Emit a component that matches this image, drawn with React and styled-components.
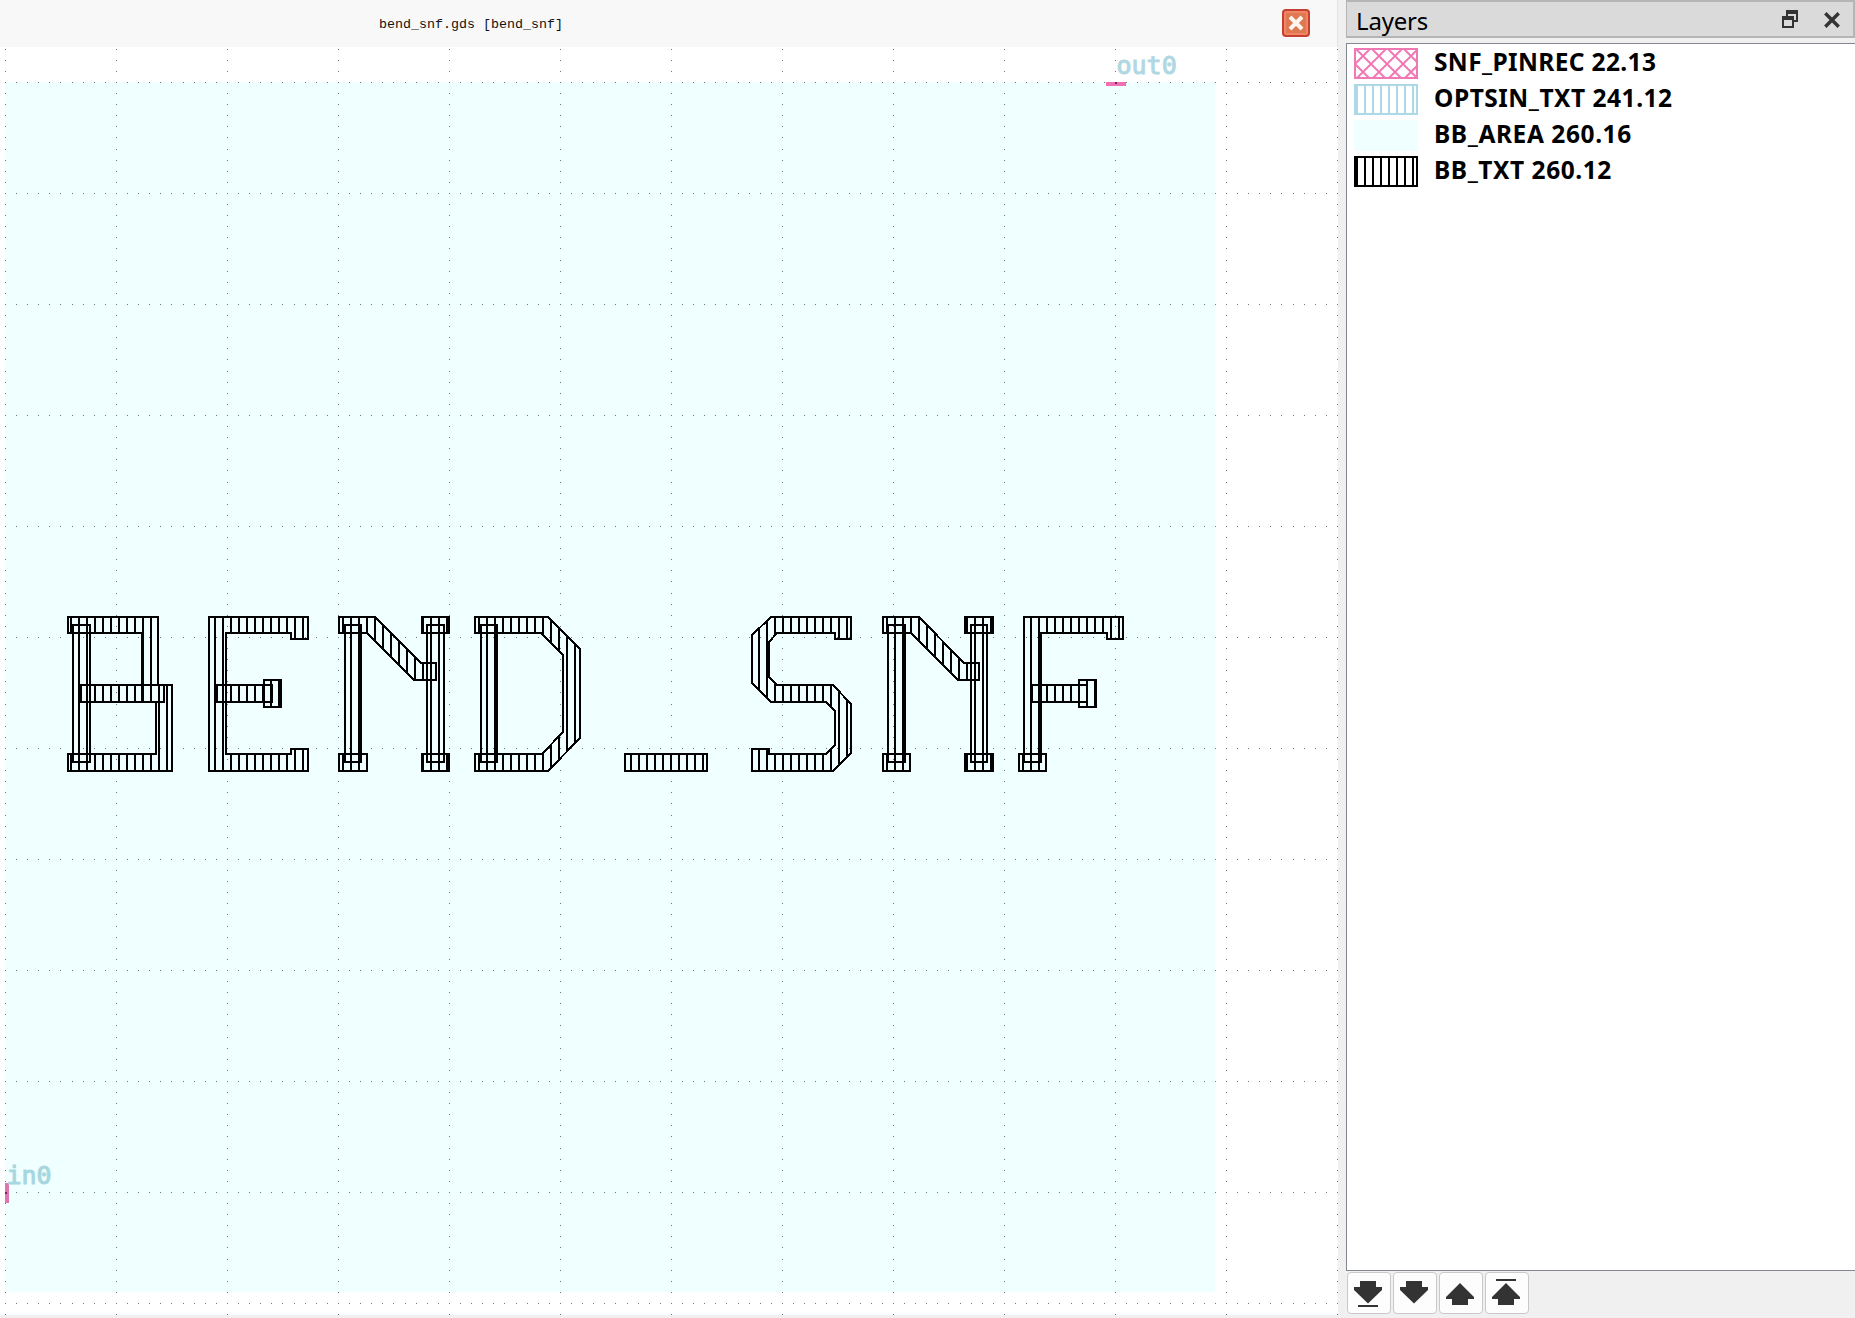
import React from 'react';
import styled, { createGlobalStyle } from 'styled-components';

const GlobalStyle = createGlobalStyle`
  * { box-sizing: border-box; }
  body { margin: 0; background: #f0f0f0; overflow: hidden; }
`;

const Window = styled.div`
  display: flex;
  width: 1855px;
  height: 1318px;
  background: #f0f0f0;
  font-family: 'Noto Sans', 'Open Sans', sans-serif;
  color: #000;
`;

const Viewer = styled.main`
  display: flex;
  flex-direction: column;
  width: 1338px;
  flex: none;
`;

const TabBar = styled.header`
  display: flex;
  align-items: center;
  justify-content: space-between;
  height: 47px;
  padding: 0 27px 1px 379px;
  background: #f8f8f8;
  border-right: 1px solid #e2e2e2;
`;

const TabTitle = styled.span`
  padding-top: 4px;
  font: 13.33px/20px 'Liberation Mono', monospace;
  color: #111;
  white-space: pre;
`;

const TabClose = styled.button`
  display: flex;
  align-items: center;
  justify-content: center;
  width: 28px;
  height: 28px;
  padding: 0;
  border: 2px solid #c5402f;
  border-radius: 4px;
  background: #de7850;
  box-shadow: inset 0 0 0 2px #f18565;
`;

const Canvas = styled.svg`
  display: block;
  width: 1338px;
  height: 1268px;
  background: #fff;
`;

const PinLabel = styled.text`
  font: 25px 'DejaVu Sans Mono', monospace;
  fill: ${(p) => p.$color};
  stroke: ${(p) => p.$color};
  stroke-width: 1px;
`;

const Dock = styled.aside`
  display: flex;
  flex-direction: column;
  flex: 1;
  margin-left: 8px;
`;

const DockTitle = styled.div`
  display: flex;
  align-items: center;
  height: 38px;
  padding: 0 13px 0 9px;
  background: #dadada;
  border: 2px solid #b5b5b5;
  border-left-width: 1px;
`;

const DockName = styled.span`
  flex: 1;
  padding-top: 3px;
  font-size: 24px;
  line-height: 30px;
  letter-spacing: -0.2px;
`;

const DockIcon = styled.svg`
  display: block;
  width: 16px;
  height: 18px;
  margin-left: ${(p) => p.$gap || 0}px;
`;

const LayerList = styled.ul`
  flex: none;
  height: 1228px;
  margin: 5px 0 0;
  padding: 4px 0 0 7px;
  list-style: none;
  background: #fff;
  border: 1px solid #828790;
  border-right: 0;
`;

const LayerRow = styled.li`
  display: flex;
  align-items: flex-start;
  height: 36px;
`;

const Swatch = styled.svg`
  display: block;
  width: 64px;
  height: 31px;
  flex: none;
`;

const LayerName = styled.span`
  margin-left: 16px;
  font-size: 24.5px;
  font-weight: 700;
  line-height: 28px;
  letter-spacing: ${(p) => p.$spacing}px;
  white-space: pre;
`;

const ButtonBar = styled.div`
  display: flex;
  gap: 2px;
  padding: 1px 0 0 1px;
`;

const MoveButton = styled.button`
  width: 44px;
  height: 42px;
  padding: 0;
  border: 1px solid #c9c9c9;
  border-radius: 4px;
  background: #fdfdfd;
`;

const MoveIcon = styled.svg`
  display: block;
  width: 42px;
  height: 40px;
  fill: #333;
`;

const rect = (x1, y1, x2, y2) => `${x1},${y1} ${x2},${y1} ${x2},${y2} ${x1},${y2}`;

const glyphShapes = [
  // B
  '68,617 158,617 158,685 172,685 172,771 68,771 68,754 156,754 156,702 142,702 142,633 68,633',
  rect(73, 625, 90, 762),
  rect(81, 685, 164, 702),
  // E
  '209,617 308,617 308,639 291,639 291,633 226,633 226,754 291,754 291,749 308,749 308,771 209,771',
  rect(217, 685, 272, 702),
  rect(264, 680, 281, 707),
  // N
  '339,617 375,617 421,663 436,663 436,680 414,680 367,633 339,633',
  rect(345, 625, 361, 762),
  rect(339, 754, 367, 771),
  rect(422, 617, 449, 633),
  rect(427, 625, 444, 762),
  rect(422, 754, 449, 771),
  // D
  '475,617 548,617 580,649 580,738 548,771 475,771 475,754 542,754 563,732 563,655 541,633 475,633',
  rect(481, 625, 497, 762),
  // underscore
  rect(625, 754, 707, 771),
  // S
  '771,617 851,617 851,639 835,639 835,633 777,633 769,642 769,677 777,685 833,685 851,704 851,753 833,771 752,771 752,749 769,749 769,754 826,754 835,745 835,711 826,702 771,702 752,683 752,635',
  // N
  '883,617 919,617 964,663 979,663 979,680 958,680 911,633 883,633',
  rect(888, 625, 905, 762),
  rect(883, 754, 910, 771),
  rect(965, 617, 993, 633),
  rect(971, 625, 987, 762),
  rect(965, 754, 993, 771),
  // F
  '1024,617 1123,617 1123,639 1107,639 1107,633 1041,633 1041,762 1024,762',
  rect(1019, 754, 1046, 771),
  rect(1032, 685, 1087, 702),
  rect(1079, 680, 1096, 707),
];

const STEP = 111;
const OFFSETS = [0, 11, 22, 33, 44, 55, 67, 78, 89, 100];

function gridPath() {
  const dots = [];
  const dot = (x, y) => {
    if (x < 1338 && y >= 47 && y < 1315) dots.push(`M${x} ${y}h1v1h-1z`);
  };
  for (let i = 0; i <= 12; i += 1) {
    for (let j = -1; j <= 11; j += 1) {
      const x = 5 + i * STEP;
      const y = 82 + j * STEP;
      OFFSETS.forEach((o) => {
        dot(x, y + o);
        if (o) dot(x + o, y);
      });
    }
  }
  return dots.join('');
}

const GRID = gridPath();

function Layout() {
  return (
    <Canvas viewBox="0 47 1338 1268">
      <defs>
        <pattern id="hatch" width="8" height="8" patternUnits="userSpaceOnUse">
          <rect x="6" width="2" height="8" fill="#000" />
        </pattern>
      </defs>
      <g shapeRendering="crispEdges">
        <rect x="5" y="82" width="1210" height="1210" fill="#f0ffff" />
        <rect x="1106" y="82" width="20" height="4" fill="#ee70b3" />
        <rect x="5" y="1183" width="4" height="20" fill="#df75b0" />
        <path d={GRID} fill="#6e7676" />
        <rect x="1115" y="82" width="2" height="2" fill="#7b1c5c" />
        <rect x="5" y="1192" width="2" height="2" fill="#7b1c6c" />
        {glyphShapes.map((points, i) => (
          <polygon key={i} points={points} fill="url(#hatch)" stroke="#000" strokeWidth="2" />
        ))}
      </g>
      <PinLabel x="1116.5" y="74" $color="#b0d8e3">out0</PinLabel>
      <PinLabel x="6.5" y="1184" $color="#a6d7e1">in0</PinLabel>
    </Canvas>
  );
}

const layers = [
  { name: 'SNF_PINREC 22.13', color: '#f078b4', kind: 'cross', spacing: 0.37 },
  { name: 'OPTSIN_TXT 241.12', color: '#add8e6', kind: 'lines', spacing: 0.52 },
  { name: 'BB_AREA 260.16', color: '#f0ffff', kind: 'solid', spacing: 0.58 },
  { name: 'BB_TXT 260.12', color: '#000000', kind: 'lines', spacing: 0.55 },
];

function LayerSwatch({ color, kind }) {
  if (kind === 'solid') {
    return (
      <Swatch viewBox="0 0 64 31">
        <rect width="64" height="31" fill={color} />
      </Swatch>
    );
  }
  const lines =
    kind === 'lines'
      ? [3, 11, 19, 27, 35, 43, 51, 59].map((x) => `M${x} 0V31`)
      : [-31, -15, 1, 17, 33, 49].map((x) => `M${x} 0l31 31M${x + 32} 0l-31 31`);
  return (
    <Swatch viewBox="0 0 64 31" fill="none" stroke={color} strokeWidth="2">
      <path d={lines.join('')} strokeWidth="2" />
      <rect x="1" y="1" width="62" height="29" />
    </Swatch>
  );
}

const DOWN = 'M12 8h16v6h6v3L20 30.5 6 17v-3h6z';
const UP = 'M20 10l14 14v2h-6v6H12v-6H6v-2z';

const moves = [
  { label: 'Move to bottom', d: `${DOWN}M10 32h20v2H10z` },
  { label: 'Move down', d: DOWN },
  { label: 'Move up', d: UP },
  { label: 'Move to top', d: `${UP}M10 6h20v2H10z` },
];

export default function App() {
  return (
    <Window>
      <GlobalStyle />
      <Viewer>
        <TabBar>
          <TabTitle>bend_snf.gds [bend_snf]</TabTitle>
          <TabClose aria-label="Close tab">
            <svg width="16" height="16" viewBox="0 0 16 16" stroke="#fff4ee" strokeWidth="4">
              <path d="M2 2l12 12M14 2L2 14" />
            </svg>
          </TabClose>
        </TabBar>
        <Layout />
      </Viewer>
      <Dock>
        <DockTitle>
          <DockName>Layers</DockName>
          <DockIcon viewBox="0 0 16 18" fill="#333">
            <path fillRule="evenodd" d="M4 0h12v12h-4v-2h2V4H6v2H4zM0 6h12v12H0zM2 10v6h8v-6z" />
          </DockIcon>
          <DockIcon $gap={26} viewBox="0 0 16 18" stroke="#333" strokeWidth="3.4">
            <path d="M1.3 3.3l13.4 13.4M14.7 3.3L1.3 16.7" />
          </DockIcon>
        </DockTitle>
        <LayerList>
          {layers.map((l) => (
            <LayerRow key={l.name}>
              <LayerSwatch color={l.color} kind={l.kind} />
              <LayerName $spacing={l.spacing}>{l.name}</LayerName>
            </LayerRow>
          ))}
        </LayerList>
        <ButtonBar>
          {moves.map((m) => (
            <MoveButton key={m.label} aria-label={m.label}>
              <MoveIcon viewBox="0 0 42 40"><path d={m.d} /></MoveIcon>
            </MoveButton>
          ))}
        </ButtonBar>
      </Dock>
    </Window>
  );
}
